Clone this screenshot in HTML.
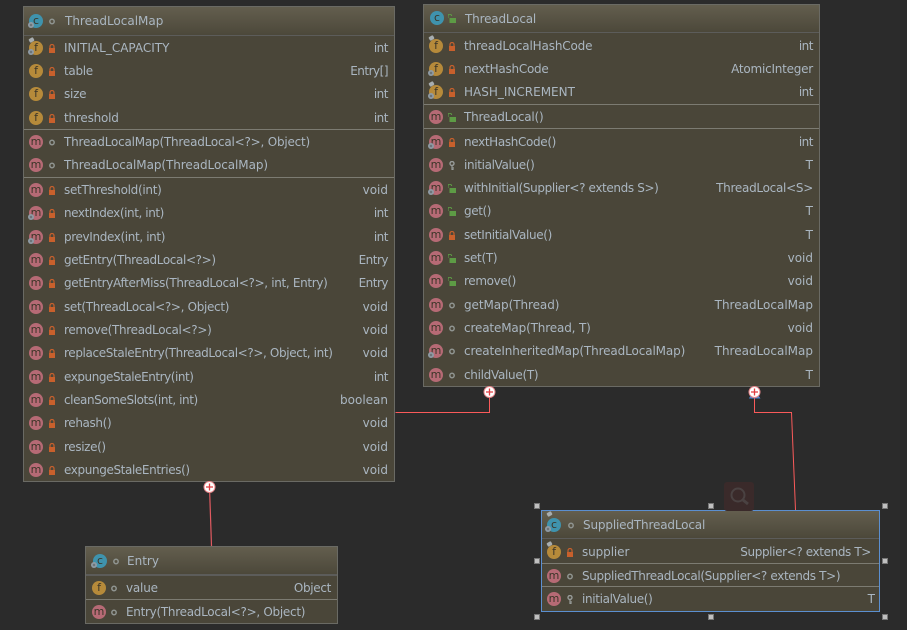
<!DOCTYPE html>
<html><head><meta charset="utf-8"><style>
html,body{margin:0;padding:0;background:#2b2b2b;width:907px;height:630px;overflow:hidden}
body{position:relative;font:12px/22px "DejaVu Sans",sans-serif;color:#aab6c1}
.b{position:absolute;box-sizing:border-box;background:#4a4639;border:1px solid #6a6a64}
.h{position:absolute;left:0;right:0;top:0;background:linear-gradient(#635e4e,#4c483a);border-bottom:1px solid #5c5c5a}
.s{position:absolute;left:0;right:0;height:1px;background:#7c7b72}
.r{position:absolute;left:0;right:0;height:22px;white-space:nowrap}
.r b{position:absolute;left:40px;font-weight:normal}
.r u{position:absolute;right:6px;text-decoration:none}
.r i,.h i{position:absolute;left:5px;top:4px;width:14px;height:14px;border-radius:50%;font:normal 11px/13px "DejaVu Sans",sans-serif;text-align:center;color:#3b3528}
i.f{background:#b68a3a}i.m{background:#b66a75}i.c{background:#3f93ad}
.r svg,.h svg{position:absolute;left:24px;top:7px;width:8px;height:9px}
.g{position:absolute;left:4px;top:12px;width:6px;height:6px;border-radius:50%;background:radial-gradient(circle,#6d7478 0 1px,#8f9ba5 1.500px);box-sizing:border-box}
.p{position:absolute;left:5px;top:1px;width:5px;height:4px;background:#a8aeb0;transform:rotate(-30deg);border-radius:1px}
.k{position:absolute;background:#c0c0c0;border:1px solid #777;box-sizing:border-box;width:6px;height:6px}
</style></head><body>
<svg width="0" height="0" style="position:absolute"><defs>
<symbol id="l" viewBox="0 0 8 9"><path d="M2 4V2.500a2 2 0 0 1 4 0V4" fill="none" stroke="#c8602c" stroke-width="1.200"/><rect x="1" y="4" width="6" height="5" fill="#c8602c"/></symbol>
<symbol id="o" viewBox="0 0 8 9"><path d="M0 4V2a1.800 1.800 0 0 1 3.600 0" fill="none" stroke="#5d9b45" stroke-width="1.100"/><rect x="1.500" y="4" width="6.500" height="5" fill="#5d9b45"/></symbol>
<symbol id="d" viewBox="0 0 8 9"><circle cx="4" cy="4.500" r="2.200" fill="none" stroke="#8f9490" stroke-width="1.500"/></symbol>
<symbol id="y" viewBox="0 0 8 9"><circle cx="4" cy="2.500" r="2" fill="none" stroke="#979b99" stroke-width="1.400"/><path d="M4 4.500V9M4 7h2M4 8.600h1.600" fill="none" stroke="#979b99" stroke-width="1.200"/></symbol>
</defs></svg>

<div class="b" style="left:23px;top:6px;width:372px;height:476px">
<div class="h" style="height:28px"><i class="c" style="left:5px;top:7px">c</i><span class="g" style="left:4px;top:15px"></span><svg style="top:10px;left:24px"><use href="#d"/></svg><span style="position:absolute;left:41px;top:3px">ThreadLocalMap</span></div>
<div class="r" style="top:30px"><i class="f">f</i><span class="p"></span><span class="g"></span><svg><use href="#l"/></svg><b>INITIAL_CAPACITY</b><u style="letter-spacing:-.5px">int</u></div>
<div class="r" style="top:53px"><i class="f">f</i><svg><use href="#l"/></svg><b style="letter-spacing:-.3px">table</b><u style="letter-spacing:-.5px">Entry[]</u></div>
<div class="r" style="top:76px"><i class="f">f</i><svg><use href="#l"/></svg><b style="letter-spacing:-.25px">size</b><u style="letter-spacing:-.5px">int</u></div>
<div class="r" style="top:100px"><i class="f">f</i><svg><use href="#l"/></svg><b style="letter-spacing:-.2px">threshold</b><u style="letter-spacing:-.5px">int</u></div>
<div class="s" style="top:122px"></div>
<div class="r" style="top:124px"><i class="m">m</i><svg><use href="#d"/></svg><b style="letter-spacing:-.21px">ThreadLocalMap(ThreadLocal&lt;?&gt;, Object)</b></div>
<div class="r" style="top:147px"><i class="m">m</i><svg><use href="#d"/></svg><b style="letter-spacing:-.07px">ThreadLocalMap(ThreadLocalMap)</b></div>
<div class="s" style="top:170px"></div>
<div class="r" style="top:172px"><i class="m">m</i><svg><use href="#l"/></svg><b style="letter-spacing:-.29px">setThreshold(int)</b><u>void</u></div>
<div class="r" style="top:195px"><i class="m">m</i><span class="g"></span><svg><use href="#l"/></svg><b style="letter-spacing:-.42px">nextIndex(int, int)</b><u style="letter-spacing:-.5px">int</u></div>
<div class="r" style="top:219px"><i class="m">m</i><span class="g"></span><svg><use href="#l"/></svg><b style="letter-spacing:-.37px">prevIndex(int, int)</b><u style="letter-spacing:-.5px">int</u></div>
<div class="r" style="top:242px"><i class="m">m</i><svg><use href="#l"/></svg><b style="letter-spacing:-.37px">getEntry(ThreadLocal&lt;?&gt;)</b><u style="letter-spacing:-.5px">Entry</u></div>
<div class="r" style="top:265px"><i class="m">m</i><svg><use href="#l"/></svg><b style="letter-spacing:-.33px">getEntryAfterMiss(ThreadLocal&lt;?&gt;, int, Entry)</b><u style="letter-spacing:-.5px">Entry</u></div>
<div class="r" style="top:289px"><i class="m">m</i><svg><use href="#l"/></svg><b style="letter-spacing:-.33px">set(ThreadLocal&lt;?&gt;, Object)</b><u>void</u></div>
<div class="r" style="top:312px"><i class="m">m</i><svg><use href="#l"/></svg><b style="letter-spacing:-.32px">remove(ThreadLocal&lt;?&gt;)</b><u>void</u></div>
<div class="r" style="top:335px"><i class="m">m</i><svg><use href="#l"/></svg><b style="letter-spacing:-.37px">replaceStaleEntry(ThreadLocal&lt;?&gt;, Object, int)</b><u>void</u></div>
<div class="r" style="top:359px"><i class="m">m</i><svg><use href="#l"/></svg><b style="letter-spacing:-.45px">expungeStaleEntry(int)</b><u style="letter-spacing:-.5px">int</u></div>
<div class="r" style="top:382px"><i class="m">m</i><svg><use href="#l"/></svg><b style="letter-spacing:-.42px">cleanSomeSlots(int, int)</b><u>boolean</u></div>
<div class="r" style="top:405px"><i class="m">m</i><svg><use href="#l"/></svg><b style="letter-spacing:-.37px">rehash()</b><u>void</u></div>
<div class="r" style="top:429px"><i class="m">m</i><svg><use href="#l"/></svg><b style="letter-spacing:-.37px">resize()</b><u>void</u></div>
<div class="r" style="top:452px"><i class="m">m</i><svg><use href="#l"/></svg><b style="letter-spacing:-.38px">expungeStaleEntries()</b><u>void</u></div>
</div>

<div class="b" style="left:423px;top:4px;width:397px;height:383px">
<div class="h" style="height:27px"><i class="c" style="left:6px;top:6px">c</i><svg style="left:24px;top:9px"><use href="#o"/></svg><span style="position:absolute;left:41px;top:3px;letter-spacing:-.18px">ThreadLocal</span></div>
<div class="r" style="top:30px"><i class="f">f</i><span class="p"></span><svg><use href="#l"/></svg><b style="letter-spacing:-.16px">threadLocalHashCode</b><u style="letter-spacing:-.5px">int</u></div>
<div class="r" style="top:53px"><i class="f">f</i><span class="g"></span><svg><use href="#l"/></svg><b style="letter-spacing:-.25px">nextHashCode</b><u style="letter-spacing:-.23px">AtomicInteger</u></div>
<div class="r" style="top:76px"><i class="f">f</i><span class="p"></span><span class="g"></span><svg><use href="#l"/></svg><b>HASH_INCREMENT</b><u style="letter-spacing:-.5px">int</u></div>
<div class="s" style="top:99px"></div>
<div class="r" style="top:101px"><i class="m">m</i><svg><use href="#o"/></svg><b style="letter-spacing:-.23px">ThreadLocal()</b></div>
<div class="s" style="top:123px"></div>
<div class="r" style="top:126px"><i class="m">m</i><span class="g"></span><svg><use href="#l"/></svg><b style="letter-spacing:-.35px">nextHashCode()</b><u style="letter-spacing:-.5px">int</u></div>
<div class="r" style="top:149px"><i class="m">m</i><svg><use href="#y"/></svg><b style="letter-spacing:-.35px">initialValue()</b><u>T</u></div>
<div class="r" style="top:172px"><i class="m">m</i><span class="g"></span><svg><use href="#o"/></svg><b style="letter-spacing:-.37px">withInitial(Supplier&lt;? extends S&gt;)</b><u style="letter-spacing:-.28px">ThreadLocal&lt;S&gt;</u></div>
<div class="r" style="top:195px"><i class="m">m</i><svg><use href="#o"/></svg><b style="letter-spacing:-.4px">get()</b><u>T</u></div>
<div class="r" style="top:219px"><i class="m">m</i><svg><use href="#l"/></svg><b style="letter-spacing:-.35px">setInitialValue()</b><u>T</u></div>
<div class="r" style="top:242px"><i class="m">m</i><svg><use href="#o"/></svg><b style="letter-spacing:-.3px">set(T)</b><u>void</u></div>
<div class="r" style="top:265px"><i class="m">m</i><svg><use href="#o"/></svg><b style="letter-spacing:-.37px">remove()</b><u>void</u></div>
<div class="r" style="top:289px"><i class="m">m</i><svg><use href="#d"/></svg><b style="letter-spacing:-.07px">getMap(Thread)</b><u>ThreadLocalMap</u></div>
<div class="r" style="top:312px"><i class="m">m</i><svg><use href="#d"/></svg><b style="letter-spacing:-.15px">createMap(Thread, T)</b><u>void</u></div>
<div class="r" style="top:335px"><i class="m">m</i><span class="g"></span><svg><use href="#d"/></svg><b style="letter-spacing:-.12px">createInheritedMap(ThreadLocalMap)</b><u>ThreadLocalMap</u></div>
<div class="r" style="top:359px"><i class="m">m</i><svg><use href="#d"/></svg><b style="letter-spacing:-.3px">childValue(T)</b><u>T</u></div>
</div>

<div class="b" style="left:85px;top:546px;width:253px;height:78px">
<div class="h" style="height:27px"><i class="c" style="left:7px;top:7px">c</i><span class="g" style="left:5px;top:15px"></span><svg style="left:26px;top:10px"><use href="#d"/></svg><span style="position:absolute;left:41px;top:3px">Entry</span></div>
<div class="s" style="top:28px;background:#5c5c5a"></div>
<div class="r" style="top:30px"><i class="f" style="left:6px">f</i><svg><use href="#d"/></svg><b style="letter-spacing:-.2px">value</b><u style="letter-spacing:-.33px">Object</u></div>
<div class="s" style="top:52px"></div>
<div class="r" style="top:54px"><i class="m" style="left:6px">m</i><svg><use href="#d"/></svg><b style="letter-spacing:-.29px">Entry(ThreadLocal&lt;?&gt;, Object)</b></div>
</div>

<div class="b" style="left:541px;top:510px;width:339px;height:102px;border-color:#5b8fd0">
<div class="h" style="height:27px"><i class="c" style="left:5px;top:7px">c</i><span class="p"></span><span class="g" style="left:3px;top:15px"></span><svg style="left:25px;top:10px"><use href="#d"/></svg><span style="position:absolute;left:41px;top:3px;letter-spacing:-.16px">SuppliedThreadLocal</span></div>
<div class="r" style="top:30px"><i class="f">f</i><span class="p"></span><svg><use href="#l"/></svg><b style="letter-spacing:-.1px">supplier</b><u style="right:8px;letter-spacing:-.38px">Supplier&lt;? extends T&gt;</u></div>
<div class="s" style="top:52px"></div>
<div class="r" style="top:54px"><i class="m">m</i><svg><use href="#d"/></svg><b style="letter-spacing:-.36px">SuppliedThreadLocal(Supplier&lt;? extends T&gt;)</b></div>
<div class="s" style="top:75px"></div>
<div class="r" style="top:77px"><i class="m">m</i><svg><use href="#y"/></svg><b style="letter-spacing:-.35px">initialValue()</b><u style="right:4px">T</u></div>
</div>

<svg width="907" height="630" style="position:absolute;left:0;top:0">
<rect x="724" y="482" width="30" height="29" rx="3" fill="#3a2a2a"/>
<circle cx="738" cy="495" r="6.500" fill="none" stroke="#4a4242" stroke-width="2"/><path d="M743 500l5 4" stroke="#4a4242" stroke-width="3"/>
<path d="M395.500 412.500H489.500V392" fill="none" stroke="#fa5a5a" stroke-width="1"/>
<path d="M209.500 487L211.500 546" fill="none" stroke="#e05a60" stroke-width="1.200"/>
<path d="M754.500 392V412.500H791.500L795.500 510" fill="none" stroke="#fa5a5a" stroke-width="1"/>
<path d="M749 398.500h11.500l-2-3h-8z" fill="#4a86d0"/>
<g fill="#fff" stroke="#e8868a" stroke-width="1">
<circle cx="489.500" cy="392" r="5.500"/><circle cx="209.500" cy="487" r="5.500"/><circle cx="754.500" cy="392" r="5.500"/></g>
<path d="M486 392h7M489.500 388.500v7M206 487h7M209.500 483.500v7M751 392h7M754.500 388.500v7" stroke="#e03c40" stroke-width="1.300"/>
</svg>
<span class="k" style="left:534px;top:503px"></span><span class="k" style="left:708px;top:503px"></span><span class="k" style="left:882px;top:503px"></span>
<span class="k" style="left:534px;top:558px"></span><span class="k" style="left:882px;top:558px"></span>
<span class="k" style="left:534px;top:614px"></span><span class="k" style="left:708px;top:614px"></span><span class="k" style="left:882px;top:614px"></span>
</body></html>
